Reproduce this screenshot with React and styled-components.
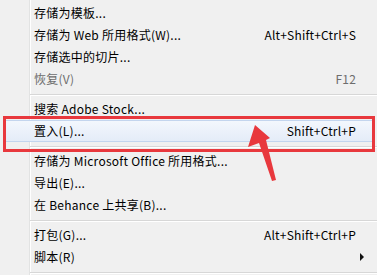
import React from 'react';
import styled, { createGlobalStyle } from 'styled-components';

const Global = createGlobalStyle`
  html, body { margin: 0; padding: 0; background: #f0f0f0; }
  body { font-family: "Noto Sans CJK SC", "Noto Sans", sans-serif; }
`;

const Menu = styled.div`
  position: relative;
  width: 377px;
  height: 275px;
  overflow: hidden;
  background: #f0f0f0;
  padding-top: 2px;
  box-sizing: border-box;
  &::before {
    content: "";
    position: absolute;
    left: 29px;
    top: 0;
    bottom: 0;
    width: 1px;
    background: #e2e3e3;
    box-shadow: 1px 0 0 #fff;
  }
`;

const Row = styled.div`
  position: relative;
  display: flex;
  align-items: center;
  justify-content: space-between;
  height: 22px;
  margin: 0 2px 0 3px;
  padding: 0 18px 0 30px;
  font-size: 12px;
  color: ${p => (p.$disabled ? '#6d6d6d' : '#000')};
  box-sizing: border-box;
  border: 1px solid ${p => (p.$active ? '#c3d5ee' : 'transparent')};
  border-radius: 2px;
  background: ${p => (p.$active ? 'linear-gradient(#f3f7fd, #e4ecf8)' : 'transparent')};
  z-index: 1;
`;

const Label = styled.span`
  white-space: pre;
  line-height: 1;
  letter-spacing: 0.25px;
`;

const Shortcut = styled.span`
  white-space: pre;
  line-height: 1;
  letter-spacing: 0.2px;
`;

const Separator = styled.div`
  position: relative;
  height: 8px;
  margin-left: 30px;
  &::after {
    content: "";
    position: absolute;
    left: 0;
    right: 0;
    top: 4px;
    height: 1px;
    background: #d7d7d7;
    box-shadow: 0 1px 0 #fff;
  }
`;

const SubArrow = styled.span`
  width: 0;
  height: 0;
  margin-right: -8px;
  border-top: 4px solid transparent;
  border-bottom: 4px solid transparent;
  border-left: 4px solid #111;
`;

const Callout = styled.div`
  position: absolute;
  left: 3px;
  top: 116px;
  width: 372px;
  height: 36px;
  box-sizing: border-box;
  border: 3px solid #e8383d;
  z-index: 2;
`;

const Pointer = styled.svg`
  position: absolute;
  left: 0;
  top: 0;
  z-index: 3;
  pointer-events: none;
`;

const items = [
  { label: '存储为模板...' },
  { label: '存储为 Web 所用格式(W)...', key: 'Alt+Shift+Ctrl+S' },
  { label: '存储选中的切片...' },
  { label: '恢复(V)', key: 'F12', disabled: true },
  'sep',
  { label: '搜索 Adobe Stock...' },
  { label: '置入(L)...', key: 'Shift+Ctrl+P', active: true },
  'sep',
  { label: '存储为 Microsoft Office 所用格式...' },
  { label: '导出(E)...' },
  { label: '在 Behance 上共享(B)...' },
  'sep',
  { label: '打包(G)...', key: 'Alt+Shift+Ctrl+P' },
  { label: '脚本(R)', sub: true },
  'sep',
];

export default function App() {
  return (
    <>
      <Global />
      <Menu>
        {items.map((it, i) =>
          it === 'sep' ? (
            <Separator key={i} />
          ) : (
            <Row key={i} $active={it.active} $disabled={it.disabled}>
              <Label>{it.label}</Label>
              {it.key && <Shortcut>{it.key}</Shortcut>}
              {it.sub && <SubArrow />}
            </Row>
          )
        )}
        <Callout />
        <Pointer width="377" height="275" viewBox="0 0 377 275">
          <polygon
            points="255,125 248,147 259,143 272,181 276,180 266,140 270,138"
            fill="#e8383d"
          />
        </Pointer>
      </Menu>
    </>
  );
}
